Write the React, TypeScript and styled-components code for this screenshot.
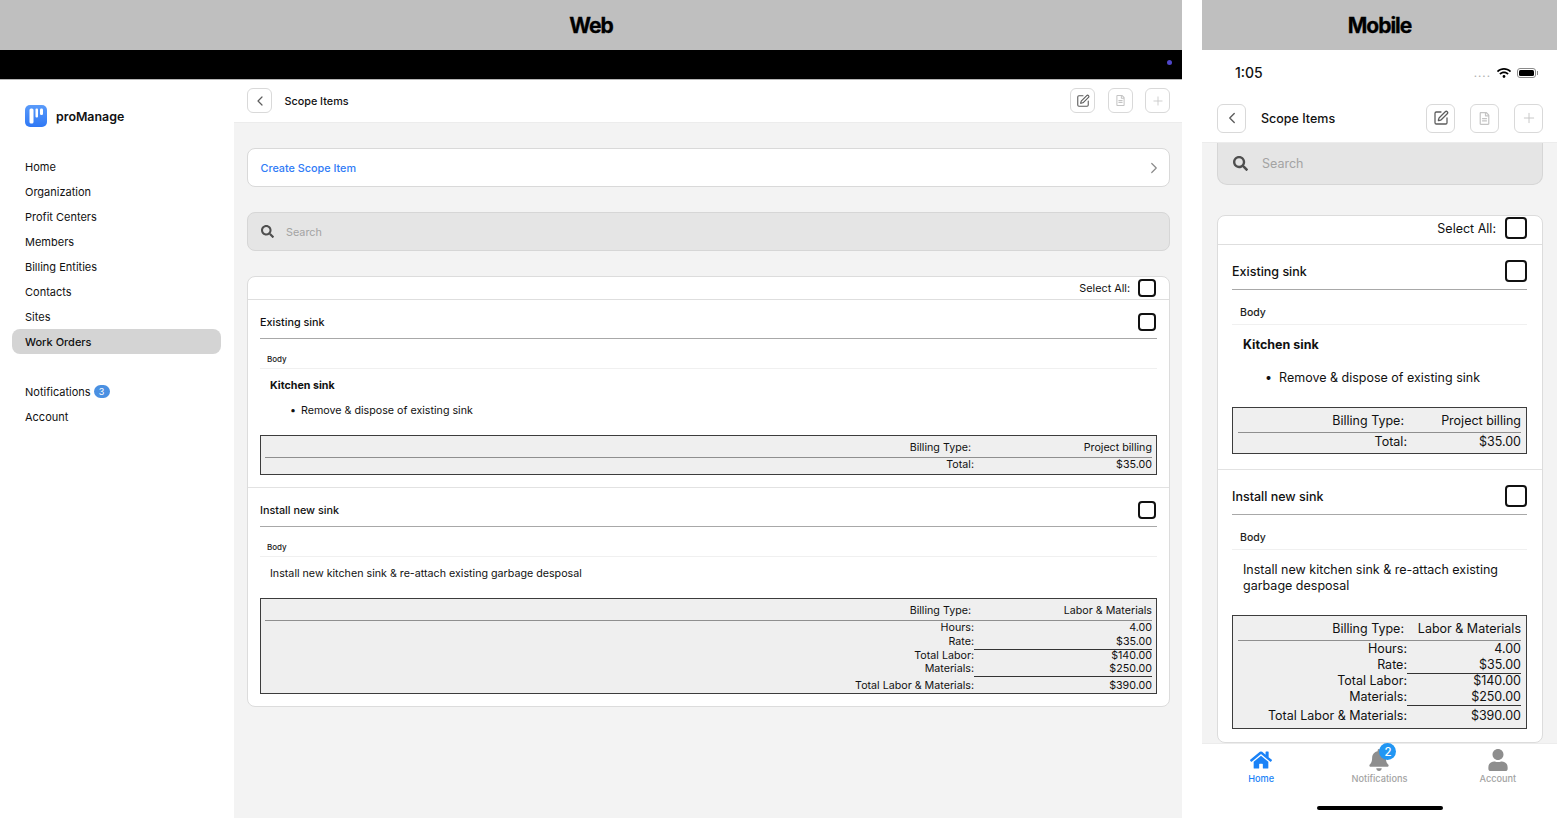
import React from "react";
import styled, { createGlobalStyle } from "styled-components";
import { ChevronLeft, ChevronRight, Plus, SquarePen } from "lucide-react";
import { FaBell, FaHome, FaRegFileAlt, FaSearch, FaUser, FaWifi } from "react-icons/fa";

const GlobalStyle = createGlobalStyle`
  html, body { margin: 0; padding: 0; background: #fff; }
  body { font-family: Inter, "Liberation Sans", sans-serif; color: #111; -webkit-font-smoothing: antialiased; }
  * { box-sizing: border-box; }
`;

type Mode = { $m?: boolean };

const Page = styled.div`
  width: 1557px;
  height: 818px;
  display: flex;
  gap: 20px;
  overflow: hidden;
`;
const WebSide = styled.div`
  width: 1182px;
  display: flex;
  flex-direction: column;
`;
const MobileSide = styled.div`
  width: 355px;
  display: flex;
  flex-direction: column;
`;
const Banner = styled.div`
  height: 50px;
  flex: none;
  background: #bfbfbf;
  color: #000;
  font-size: 21px;
  font-weight: 700;
  display: flex;
  align-items: center;
  justify-content: center;
  letter-spacing: -1px;
  -webkit-text-stroke: 0.3px #000;
`;
const BlackBar = styled.div`
  height: 30px;
  flex: none;
  background: #000;
  border-bottom: 1px solid #b5b5b5;
  display: flex;
  align-items: center;
  justify-content: flex-end;
  padding: 0 10px 4px 0;
`;
const CameraDot = styled.span`
  width: 5px;
  height: 5px;
  border-radius: 50%;
  background: #4f46c8;
`;
const WebBody = styled.div`
  flex: 1;
  display: flex;
  min-height: 0;
`;
const Sidebar = styled.nav`
  width: 234px;
  flex: none;
  padding: 25px 12px 0 13px;
  background: #fff;
`;
const Brand = styled.div`
  display: flex;
  align-items: center;
  gap: 9px;
  height: 22px;
  margin: 0 0 27px 12px;
  font-size: 12.4px;
  font-weight: 600;
`;
const BrandName = styled.span`
  padding-top: 1px;
`;
const NavItem = styled.div<{ $active?: boolean }>`
  height: 25px;
  width: 209px;
  margin-left: -1px;
  padding-left: 13px;
  display: flex;
  align-items: center;
  gap: 3px;
  font-size: 11px;
  font-weight: ${(p) => (p.$active ? 500 : 400)};
  border-radius: 8px;
  background: ${(p) => (p.$active ? "#d4d4d4" : "transparent")};
`;
const NavGap = styled.div`
  height: 25px;
`;
const NavBadge = styled.span`
  min-width: 16px;
  height: 13px;
  border-radius: 7px;
  background: #4a90e2;
  color: #fff;
  font-size: 9px;
  display: flex;
  align-items: center;
  justify-content: center;
`;
const Main = styled.main`
  flex: 1;
  min-width: 0;
  min-height: 0;
  background: #f3f3f3;
  display: flex;
  flex-direction: column;
`;
const TopBar = styled.header<Mode>`
  height: ${(p) => (p.$m ? 48 : 43)}px;
  flex: none;
  background: #fff;
  border-bottom: 1px solid #ececec;
  padding: ${(p) => (p.$m ? "0 14px 1px 15px" : "0 12px 1px 13px")};
  display: flex;
  align-items: center;
  gap: ${(p) => (p.$m ? 15 : 12.5)}px;
`;
const TopTitle = styled.div<Mode>`
  flex: 1;
  padding-top: ${(p) => (p.$m ? 0 : 1)}px;
  font-size: ${(p) => (p.$m ? 12.5 : 10.8)}px;
  font-weight: 500;
`;
const IconButton = styled.button<Mode & { $faded?: boolean }>`
  width: ${(p) => (p.$m ? 29 : 25)}px;
  height: ${(p) => (p.$m ? 29 : 25)}px;
  padding: 0;
  background: #fff;
  border: 1px solid #d9d9d9;
  border-radius: 6px;
  color: ${(p) => (p.$faded ? "#c4c4c4" : "#5c5c5c")};
  display: flex;
  align-items: center;
  justify-content: center;
`;
const Content = styled.div<Mode>`
  flex: 1;
  min-height: 0;
  overflow: hidden;
  padding: ${(p) => (p.$m ? "0 14px 0 15px" : "25px 12px 0 13px")};
  display: flex;
  flex-direction: column;
  gap: ${(p) => (p.$m ? 30 : 25)}px;
`;
const CreateCard = styled.div`
  height: 39px;
  flex: none;
  background: #fff;
  border: 1px solid #d9d9d9;
  border-radius: 8px;
  padding: 1px 6px 0 12.5px;
  display: flex;
  align-items: center;
  justify-content: space-between;
  color: #2f7bf6;
  font-size: 10.8px;
  font-weight: 500;
`;
const SearchBox = styled.div<Mode>`
  height: ${(p) => (p.$m ? 42 : 39)}px;
  flex: none;
  background: #e5e5e5;
  border: 1px solid #d6d6d6;
  border-top-width: ${(p) => (p.$m ? 0 : 1)}px;
  border-radius: ${(p) => (p.$m ? "0 0 10px 10px" : "8px")};
  padding-left: ${(p) => (p.$m ? 15 : 13)}px;
  display: flex;
  align-items: center;
  gap: ${(p) => (p.$m ? 14 : 12)}px;
  color: #4f4f4f;
  font-size: ${(p) => (p.$m ? 12.5 : 10.8)}px;
`;
const Placeholder = styled.span<Mode>`
  color: #a3a3a3;
  padding-top: ${(p) => (p.$m ? 0 : 1)}px;
`;
const ListCard = styled.section<Mode>`
  flex: none;
  background: #fff;
  border: 1px solid #dcdcdc;
  border-radius: 8px;
  overflow: hidden;
  padding-bottom: ${(p) => (p.$m ? 13 : 12)}px;
`;
const SelectRow = styled.div<Mode>`
  height: ${(p) => (p.$m ? 29 : 23)}px;
  border-bottom: 1px solid #dedede;
  padding: ${(p) => (p.$m ? "0 15px 4px 0" : "0 13px 0 0")};
  display: flex;
  align-items: center;
  justify-content: flex-end;
  gap: ${(p) => (p.$m ? 9 : 8)}px;
  font-size: ${(p) => (p.$m ? 12.5 : 10.8)}px;
`;
const CheckBox = styled.span<Mode>`
  width: ${(p) => (p.$m ? 22 : 18)}px;
  height: ${(p) => (p.$m ? 22 : 18)}px;
  border: 2px solid #111;
  border-radius: 4px;
  background: #fff;
  flex: none;
`;
const Item = styled.article<Mode & { $last?: boolean }>`
  padding: 0 ${(p) => (p.$m ? 15 : 12)}px ${(p) => (p.$last ? 0 : p.$m ? 15 : 12)}px
    ${(p) => (p.$m ? 14 : 12)}px;
  border-bottom: ${(p) => (p.$last ? "none" : "1px solid #e2e2e2")};
`;
const ItemHead = styled.div<Mode>`
  height: ${(p) => (p.$m ? 45 : 39)}px;
  padding: ${(p) => (p.$m ? "8px 0 0" : "6px 1px 0 0")};
  border-bottom: 1px solid #a8a8a8;
  display: flex;
  align-items: center;
  justify-content: space-between;
  font-size: ${(p) => (p.$m ? 12.5 : 10.8)}px;
  font-weight: 500;
`;
const BodyLabel = styled.div<Mode>`
  height: ${(p) => (p.$m ? 35 : 30)}px;
  border-bottom: 1px solid #f0f0f0;
  padding: ${(p) => (p.$m ? "10px 0 0 8px" : "10px 0 0 7px")};
  display: flex;
  align-items: center;
  font-size: ${(p) => (p.$m ? 10.5 : 8)}px;
  font-weight: 500;
  color: #222;
`;
const Description = styled.div<Mode>`
  padding: ${(p) => (p.$m ? "12px 11px 21px" : "10px 10px 17px")};
  font-size: ${(p) => (p.$m ? 12.5 : 10.7)}px;
  line-height: ${(p) => (p.$m ? 16 : 14)}px;
`;
const Heading = styled.div`
  font-weight: 700;
`;
const Bullets = styled.ul<Mode>`
  margin: ${(p) => (p.$m ? "17px 0 0" : "11px 0 0")};
  padding-left: ${(p) => (p.$m ? 22 : 20)}px;
  list-style: none;

  li {
    display: flex;
    gap: ${(p) => (p.$m ? 7 : 5)}px;
  }
  li::before {
    content: "•";
  }
`;
const SummaryTable = styled.div<Mode>`
  background: #efefef;
  border: 1px solid #3c3c3c;
  padding: ${(p) => (p.$m ? "5px 5px 0" : "4.5px 4px 0")};
  font-size: ${(p) => (p.$m ? 12.5 : 10.7)}px;
  line-height: ${(p) => (p.$m ? 16 : 14)}px;
`;
const BillingRow = styled.div<Mode>`
  display: flex;
  justify-content: flex-end;
  border-bottom: 1px solid #8f8f8f;
  padding-bottom: ${(p) => (p.$m ? 3 : 2.5)}px;
`;
const BillingLabel = styled.span`
  flex: 1;
  text-align: right;
  margin-right: 3px;
`;
const RowGrid = styled.div<Mode>`
  display: grid;
  grid-template-columns: 1fr ${(p) => (p.$m ? 114 : 178)}px;
  height: ${(p) => (p.$m ? 16 : 13.75)}px;
`;
const BillingValue = styled.span<Mode>`
  width: ${(p) => (p.$m ? 114 : 178)}px;
  text-align: right;
`;
const Label = styled.div`
  text-align: right;
`;
const Value = styled.div<{ $rule?: boolean }>`
  text-align: right;
  border-bottom: ${(p) => (p.$rule ? "1px solid #333" : "none")};
`;
const TotalRow = styled(RowGrid)<Mode & { $solo?: boolean }>`
  height: ${(p) => (p.$m ? 16 : 14)}px;
  margin-top: ${(p) => (p.$solo ? (p.$m ? 1 : 0) : 3)}px;
  margin-bottom: ${(p) => (p.$m ? (p.$solo ? 3 : 4) : p.$solo ? 2 : 0)}px;
`;
const StatusBar = styled.div`
  height: 45px;
  flex: none;
  padding: 0 19px 0 33px;
  display: flex;
  align-items: center;
  font-size: 14px;
  font-weight: 500;
`;
const StatusIcons = styled.div`
  margin-left: auto;
  display: flex;
  align-items: center;
  gap: 6px;
`;
const SignalDots = styled.span`
  font-size: 11px;
  letter-spacing: 1px;
  color: #b0b0b0;
  line-height: 1;
  margin-top: 2px;
`;
const Battery = styled.span`
  position: relative;
  width: 19px;
  height: 10px;
  padding: 1px;
  border: 1px solid #8a8a8a;
  border-radius: 3px;
  margin-right: 2px;

  &::before {
    content: "";
    display: block;
    height: 100%;
    border-radius: 1.5px;
    background: #000;
  }
  &::after {
    content: "";
    position: absolute;
    right: -3px;
    top: 2px;
    width: 1px;
    height: 4px;
    background: #8a8a8a;
  }
`;
const TabBar = styled.footer`
  height: 75px;
  flex: none;
  background: #fff;
  border-top: 1px solid #ececec;
  position: relative;
  display: grid;
  grid-template-columns: repeat(3, 1fr);
  padding-top: 5px;
`;
const Tab = styled.div<{ $active?: boolean }>`
  display: flex;
  flex-direction: column;
  align-items: center;
  gap: 2px;
  font-size: 9.2px;
  font-weight: 500;
  color: ${(p) => (p.$active ? "#1a82f7" : "#a3a3a3")};
`;
const TabIcon = styled.div<{ $active?: boolean }>`
  height: 22px;
  position: relative;
  font-size: 22px;
  color: ${(p) => (p.$active ? "#1a82f7" : "#8e8e8e")};
`;
const TabBadge = styled.span`
  position: absolute;
  top: -6px;
  left: 11px;
  width: 17px;
  height: 17px;
  border-radius: 50%;
  background: #2196f3;
  color: #fff;
  font-size: 11.5px;
  display: flex;
  align-items: center;
  justify-content: center;
`;
const HomeIndicator = styled.span`
  position: absolute;
  left: 115px;
  bottom: 8px;
  width: 126px;
  height: 4px;
  border-radius: 2px;
  background: #000;
`;

const Logo = () => (
  <svg width="22" height="22" viewBox="0 0 22 22">
    <defs>
      <linearGradient id="logoFill" x1="0" y1="0" x2="0" y2="1">
        <stop offset="0" stopColor="#5a9bfa" />
        <stop offset="1" stopColor="#2f78f5" />
      </linearGradient>
    </defs>
    <rect width="22" height="22" rx="5" fill="url(#logoFill)" />
    <rect x="4.5" y="3.5" width="4" height="15" rx="1.5" fill="#fff" />
    <rect x="10.5" y="3.5" width="2.5" height="9" rx="1" fill="#fff" />
    <rect x="15" y="3.5" width="3" height="6.5" rx="1.2" fill="#fff" />
  </svg>
);

type Row = { label: string; value: string; rule?: boolean };

const Summary = ({ m, billing, rows, total }: { m?: boolean; billing: string; rows: Row[]; total: Row }) => (
  <SummaryTable $m={m}>
    <BillingRow $m={m}>
      <BillingLabel>Billing Type:</BillingLabel>
      <BillingValue $m={m}>{billing}</BillingValue>
    </BillingRow>
    {rows.map((r) => (
      <RowGrid $m={m} key={r.label}>
        <Label>{r.label}</Label>
        <Value $rule={r.rule}>{r.value}</Value>
      </RowGrid>
    ))}
    <TotalRow $m={m} $solo={rows.length === 0}>
      <Label>{total.label}</Label>
      <Value>{total.value}</Value>
    </TotalRow>
  </SummaryTable>
);

const laborRows: Row[] = [
  { label: "Hours:", value: "4.00" },
  { label: "Rate:", value: "$35.00", rule: true },
  { label: "Total Labor:", value: "$140.00" },
  { label: "Materials:", value: "$250.00", rule: true },
];

const ScopeList = ({ m }: { m?: boolean }) => (
  <ListCard $m={m}>
    <SelectRow $m={m}>
      Select All: <CheckBox $m={m} />
    </SelectRow>
    <Item $m={m}>
      <ItemHead $m={m}>
        Existing sink <CheckBox $m={m} />
      </ItemHead>
      <BodyLabel $m={m}>Body</BodyLabel>
      <Description $m={m}>
        <Heading>Kitchen sink</Heading>
        <Bullets $m={m}>
          <li>Remove &amp; dispose of existing sink</li>
        </Bullets>
      </Description>
      <Summary m={m} billing="Project billing" rows={[]} total={{ label: "Total:", value: "$35.00" }} />
    </Item>
    <Item $m={m} $last>
      <ItemHead $m={m}>
        Install new sink <CheckBox $m={m} />
      </ItemHead>
      <BodyLabel $m={m}>Body</BodyLabel>
      <Description $m={m}>Install new kitchen sink &amp; re-attach existing garbage desposal</Description>
      <Summary
        m={m}
        billing="Labor & Materials"
        rows={laborRows}
        total={{ label: "Total Labor & Materials:", value: "$390.00" }}
      />
    </Item>
  </ListCard>
);

const Toolbar = ({ m }: { m?: boolean }) => {
  const s = m ? 16 : 14;
  return (
    <TopBar $m={m}>
      <IconButton $m={m}>
        <ChevronLeft size={s + 2} strokeWidth={1.8} />
      </IconButton>
      <TopTitle $m={m}>Scope Items</TopTitle>
      <IconButton $m={m}>
        <SquarePen size={s} strokeWidth={1.9} />
      </IconButton>
      <IconButton $m={m} $faded>
        <FaRegFileAlt size={s - 3} />
      </IconButton>
      <IconButton $m={m} $faded>
        <Plus size={s} strokeWidth={1.4} />
      </IconButton>
    </TopBar>
  );
};

const navItems = ["Home", "Organization", "Profit Centers", "Members", "Billing Entities", "Contacts", "Sites"];

export default function App() {
  return (
    <Page>
      <GlobalStyle />
      <WebSide>
        <Banner>Web</Banner>
        <BlackBar>
          <CameraDot />
        </BlackBar>
        <WebBody>
          <Sidebar>
            <Brand>
              <Logo />
              <BrandName>proManage</BrandName>
            </Brand>
            {navItems.map((n) => (
              <NavItem key={n}>{n}</NavItem>
            ))}
            <NavItem $active>Work Orders</NavItem>
            <NavGap />
            <NavItem>
              Notifications <NavBadge>3</NavBadge>
            </NavItem>
            <NavItem>Account</NavItem>
          </Sidebar>
          <Main>
            <Toolbar />
            <Content>
              <CreateCard>
                Create Scope Item
                <ChevronRight size={18} color="#8a8a8a" strokeWidth={1.6} />
              </CreateCard>
              <SearchBox>
                <FaSearch size={13} />
                <Placeholder>Search</Placeholder>
              </SearchBox>
              <ScopeList />
            </Content>
          </Main>
        </WebBody>
      </WebSide>
      <MobileSide>
        <Banner>Mobile</Banner>
        <StatusBar>
          1:05
          <StatusIcons>
            <SignalDots>....</SignalDots>
            <FaWifi size={14} color="#000" />
            <Battery />
          </StatusIcons>
        </StatusBar>
        <Toolbar m />
        <Main>
          <Content $m>
            <SearchBox $m>
              <FaSearch size={15} />
              <Placeholder $m>Search</Placeholder>
            </SearchBox>
            <ScopeList m />
          </Content>
        </Main>
        <TabBar>
          <Tab $active>
            <TabIcon $active>
              <FaHome />
            </TabIcon>
            Home
          </Tab>
          <Tab>
            <TabIcon>
              <FaBell />
              <TabBadge>2</TabBadge>
            </TabIcon>
            Notifications
          </Tab>
          <Tab>
            <TabIcon>
              <FaUser />
            </TabIcon>
            Account
          </Tab>
          <HomeIndicator />
        </TabBar>
      </MobileSide>
    </Page>
  );
}
